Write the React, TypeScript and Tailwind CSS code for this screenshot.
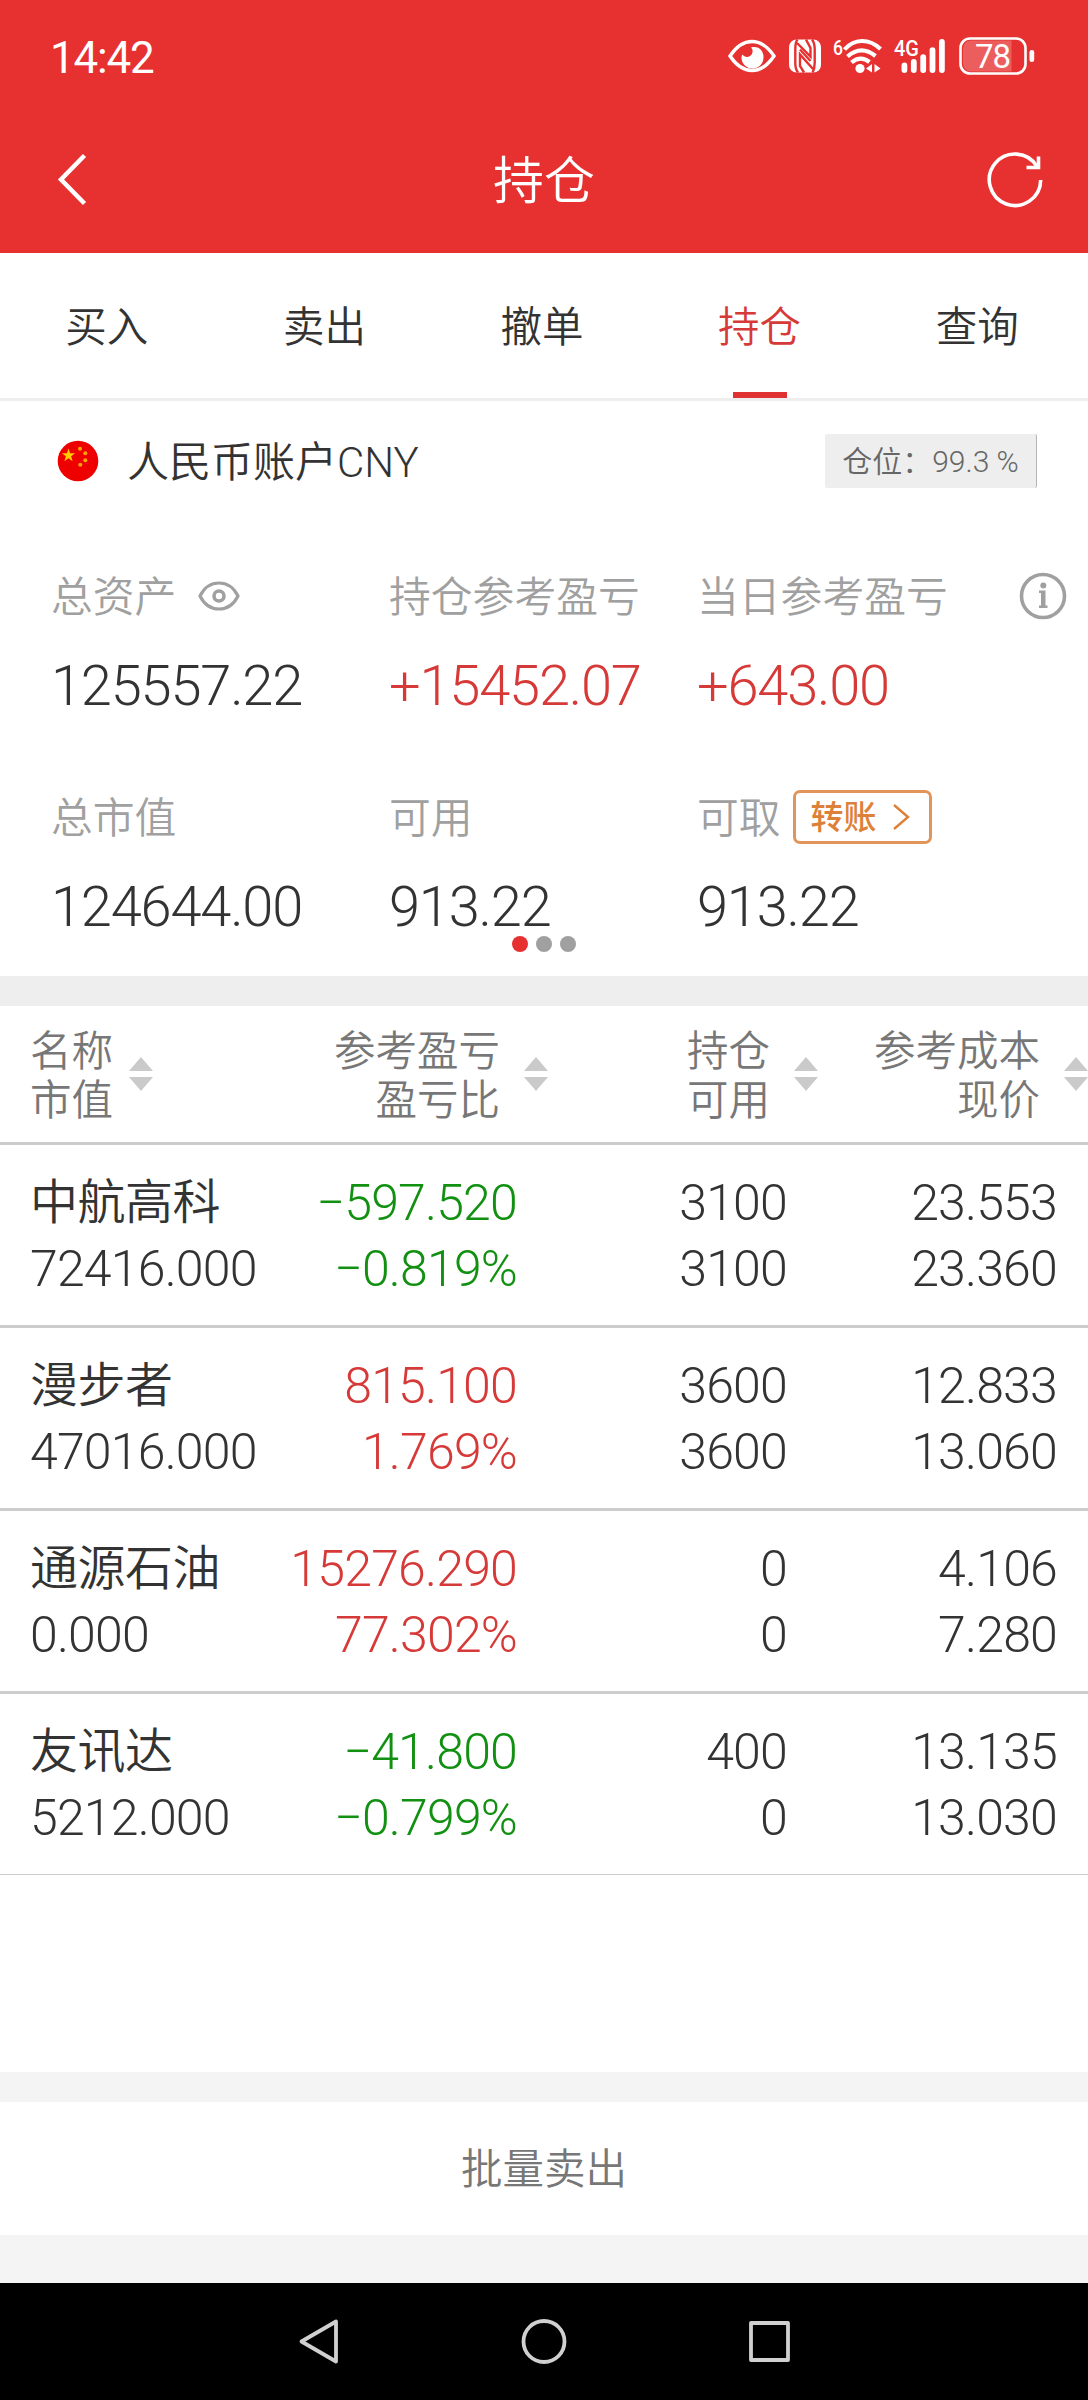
import clsx from "clsx";

interface Holding {
  name: string;
  marketValue: string;
  profit: string;
  profitRate: string;
  amount: string;
  available: string;
  cost: string;
  price: string;
  trend: "up" | "down";
}

const tabs = ["买入", "卖出", "撤单", "持仓", "查询"];
const activeTab = "持仓";

const holdings: Holding[] = [
  { name: "中航高科", marketValue: "72416.000", profit: "−597.520", profitRate: "−0.819%", amount: "3100", available: "3100", cost: "23.553", price: "23.360", trend: "down" },
  { name: "漫步者", marketValue: "47016.000", profit: "815.100", profitRate: "1.769%", amount: "3600", available: "3600", cost: "12.833", price: "13.060", trend: "up" },
  { name: "通源石油", marketValue: "0.000", profit: "15276.290", profitRate: "77.302%", amount: "0", available: "0", cost: "4.106", price: "7.280", trend: "up" },
  { name: "友讯达", marketValue: "5212.000", profit: "−41.800", profitRate: "−0.799%", amount: "400", available: "0", cost: "13.135", price: "13.030", trend: "down" },
];

const headers = [
  { lines: ["名称", "市值"], left: true },
  { lines: ["参考盈亏", "盈亏比"] },
  { lines: ["持仓", "可用"] },
  { lines: ["参考成本", "现价"] },
];

function StatusBar() {
  return (
    <div className="flex h-[112px] items-center justify-between pl-[50px] pr-[53px]">
      <span className="pt-[3px] text-[44px] leading-none tracking-[-1.2px] font-normal">14:42</span>
      <div className="flex items-center font-normal">
        <svg width="48" height="34" viewBox="0 0 48 34" className="mr-[13px]" fill="none">
          <path d="M2 17C8 8 15 2.5 24 2.5S40 8 46 17C40 26 33 31.5 24 31.5S8 26 2 17Z" stroke="white" strokeWidth="3.4" />
          <path d="M23 8.500C31 6.500 35.500 12 35.500 18A11 11 0 0 1 13.500 19C13.500 17.500 13.800 16.500 14.500 15.500C16 18 19.500 18.800 22 17C25 15 25.500 11 23 8.500Z" fill="white" />
        </svg>
        <svg width="32" height="34" viewBox="0 0 32 34" className="mr-[12px]">
          <rect x="0" y="0.500" width="32" height="33" rx="7.500" fill="white" />
          <g stroke="#e73030" strokeWidth="2.400" fill="none">
            <path d="M8.500 0.500C6.500 3 6.300 6 6.300 10V24C6.300 28 7 31 9 33.500" />
            <path d="M23 0.500C25 3 25.700 6 25.700 10V24C25.700 28 25 31 23.500 33.500" />
            <path d="M8 4L21.500 17.500V9L17 0.500" />
            <path d="M15 33.500L11 27V15.500L24 30" />
            <path d="M11 10.500L21.500 22" />
          </g>
        </svg>
        <svg width="50" height="38" viewBox="0 0 50 38" className="mr-[11px] overflow-visible" fill="none">
          <text x="0" y="17.500" fontSize="21" fontWeight="500" fill="white" textLength="10" lengthAdjust="spacingAndGlyphs">6</text>
          <g stroke="white" strokeWidth="4.200">
            <path d="M11.500 12.500C21 1.500 36 1 47.500 12" />
            <path d="M14.500 19.500Q28 7.500 42.500 19" />
            <path d="M18.500 25.500Q27.500 18 36.500 25" />
          </g>
          <circle cx="27" cy="31.500" r="4.600" fill="white" />
          <path d="M39 27v8.500l-6-4zM41.500 27v8.500l6-4z" fill="white" />
        </svg>
        <svg width="52" height="38" viewBox="0 0 52 38" className="mr-[13px] overflow-visible">
          <text x="0" y="18.500" fontSize="22.500" fontWeight="500" fill="white" textLength="25" lengthAdjust="spacingAndGlyphs">4G</text>
          <g fill="white">
            <rect x="7.500" y="25.500" width="5.800" height="10.500" rx="2.900" />
            <rect x="16.900" y="22" width="5.800" height="14" rx="2.900" />
            <rect x="26.300" y="17.300" width="5.800" height="18.700" rx="2.900" />
            <rect x="35.600" y="10.300" width="5.800" height="25.700" rx="2.900" />
            <rect x="45" y="2" width="5.800" height="34" rx="2.900" />
          </g>
        </svg>
        <svg width="76" height="38" viewBox="0 0 76 38">
          <path d="M12 3.500H52.500V34.500H12a8 8 0 0 1-8-8v-15a8 8 0 0 1 8-8Z" fill="white" fillOpacity="0.22" />
          <rect x="1.500" y="1.500" width="65" height="35" rx="9.500" fill="none" stroke="white" strokeWidth="2.600" />
          <rect x="70.500" y="13" width="4.700" height="12" rx="2.300" fill="white" />
          <text x="34" y="31" fontSize="33" textAnchor="middle" textLength="36" fill="white">78</text>
        </svg>
      </div>
    </div>
  );
}

function TitleBar() {
  return (
    <div className="flex h-[141px] items-center justify-between pl-[56px] pr-[42px] pb-[7px]">
      <svg width="62" height="54" viewBox="0 0 62 54" fill="none" stroke="white" strokeWidth="4.500">
        <path d="M28.500 3.500L5 27.500L28.500 51.500" />
      </svg>
      <h1 className="mr-[14px] pt-[4px] text-[51px] leading-none">持仓</h1>
      <svg width="62" height="62" viewBox="0 0 62 62" fill="none" stroke="white" strokeWidth="3.600">
        <path d="M56.700 32A25.700 25.700 0 1 1 53 18.500" />
        <path d="M54.500 8.500V19.500H42.500" />
      </svg>
    </div>
  );
}

function ChinaFlag() {
  return (
    <svg width="42" height="42" viewBox="0 0 42 42">
      <circle cx="21" cy="21" r="20.300" fill="#ee0000" />
      <path d="M11.500 8.500l1.600 4.800h5l-4 3 1.500 4.900-4.100-3-4.100 3 1.500-4.900-4-3h5z" fill="#ffcc00" />
      <g fill="#f7a500">
        <circle cx="23" cy="8.800" r="2" />
        <circle cx="28.300" cy="13.300" r="2" />
        <circle cx="28.300" cy="20.300" r="2" />
        <circle cx="23.300" cy="24.700" r="2" />
      </g>
    </svg>
  );
}

interface StatProps {
  label: string;
  value: string;
  red?: boolean;
  children?: React.ReactNode;
}

function Stat({ label, value, red, children }: StatProps) {
  return (
    <div>
      <div className="flex h-[60px] items-center text-[41.8px] leading-none whitespace-nowrap text-[#a0a0a0]">
        <span className="pt-[3px]">{label}</span>
        {children}
      </div>
      <div
        className={clsx(
          "mt-[30px] h-[60px] text-[56px] leading-[60px] tracking-[-1.2px]",
          red ? "text-[#d63a38]" : "text-[#333333]"
        )}
      >
        {value}
      </div>
    </div>
  );
}

function SortArrows() {
  return (
    <svg width="24" height="34" viewBox="0 0 24 34" fill="#cacaca">
      <path d="M12 0L24 14H0zM0 20H24L12 34z" />
    </svg>
  );
}

function Account() {
  return (
    <section className="h-[575px]">
      <div className="flex h-[120px] items-center justify-between pl-[57px] pr-[51px]">
        <div className="flex items-center">
          <ChinaFlag />
          <span className="ml-[28px] pt-[3px] text-[42px] leading-none text-[#333333]">人民币账户CNY</span>
        </div>
        <div className="flex h-[54px] w-[212px] items-center justify-center rounded-[2px] border-r border-[#b5b5b5] bg-[#eeeeee] pt-[2px] text-[30px] leading-none whitespace-pre text-[#666666]">
          仓位：99.3 %
        </div>
      </div>
      <div className="relative grid grid-cols-[338px_308px_1fr] gap-y-[71px] pt-[45px] pl-[51px]">
        <Stat label="总资产" value="125557.22">
          <svg width="42" height="30" viewBox="0 0 42 30" className="ml-[22px]" fill="none" stroke="#a0a0a0">
            <path d="M2 15C6.500 6 13 2 21 2s14.500 4 19 13c-4.500 9-11 13-19 13S6.500 24 2 15Z" strokeWidth="3.200" />
            <circle cx="21" cy="15" r="5" strokeWidth="3.600" />
          </svg>
        </Stat>
        <Stat label="持仓参考盈亏" value="+15452.07" red />
        <Stat label="当日参考盈亏" value="+643.00" red>
          <svg width="48" height="48" viewBox="0 0 48 48" className="ml-[71px]" fill="none">
            <circle cx="24" cy="24" r="21.500" stroke="#a0a0a0" strokeWidth="3.600" />
            <circle cx="24.300" cy="13.500" r="3" fill="#a0a0a0" />
            <path d="M20 18.500h6.500v15h2V36H20v-2.500h2V21h-2z" fill="#a0a0a0" />
          </svg>
        </Stat>
        <Stat label="总市值" value="124644.00" />
        <Stat label="可用" value="913.22" />
        <Stat label="可取" value="913.22">
          <button className="ml-[12px] flex h-[54px] w-[139px] items-center rounded-[7px] border-[3px] border-[#e2955a] pl-[15px] text-[33px] font-medium text-[#dd8038]">
            <span className="pt-px">转账</span>
            <svg width="18" height="28" viewBox="0 0 18 28" className="ml-[15px]" fill="none" stroke="#dd8038" strokeWidth="2.400">
              <path d="M2 2L16 14L2 26" />
            </svg>
          </button>
        </Stat>
        <div className="absolute top-[415px] left-[512px] flex gap-2">
          <span className="size-4 rounded-full bg-[#e73030]" />
          <span className="size-4 rounded-full bg-[#a0a0a0]" />
          <span className="size-4 rounded-full bg-[#a0a0a0]" />
        </div>
      </div>
    </section>
  );
}

function HoldingRow({ item, last }: { item: Holding; last: boolean }) {
  return (
    <div
      className={clsx(
        "grid grid-cols-[239px_248px_270px_270px] pt-[25px] pl-[30px] text-right text-[50px] leading-[66px] tracking-[-0.8px] whitespace-nowrap text-[#333333]",
        last ? "h-[181px] border-b border-[#cccccc]" : "h-[183px] border-b-[3px] border-[#cccccc]"
      )}
    >
      <div className="text-left">
        <p className="text-[48px] tracking-[-0.5px]">{item.name}</p>
        <p>{item.marketValue}</p>
      </div>
      <div className={item.trend === "up" ? "text-[#d63a38]" : "text-[#129012]"}>
        <p>{item.profit}</p>
        <p>{item.profitRate}</p>
      </div>
      <div>
        <p>{item.amount}</p>
        <p>{item.available}</p>
      </div>
      <div>
        <p>{item.cost}</p>
        <p>{item.price}</p>
      </div>
    </div>
  );
}

function NavBar() {
  return (
    <nav className="flex h-[117px] items-center justify-center gap-[178px] bg-black">
      <svg width="48" height="50" viewBox="0 0 48 50" fill="none" stroke="#d0d0d0" strokeWidth="3.800" strokeLinejoin="round">
        <path d="M42 4.500V44.500L7.500 24.500Z" />
      </svg>
      <svg width="48" height="50" viewBox="0 0 48 50" fill="none" stroke="#d0d0d0" strokeWidth="3.800">
        <circle cx="24" cy="24.500" r="20.500" />
      </svg>
      <svg width="48" height="50" viewBox="0 0 48 50" fill="none" stroke="#d0d0d0" strokeWidth="3.800" strokeLinejoin="round">
        <rect x="5" y="6" width="37" height="37" />
      </svg>
    </nav>
  );
}

export default function App() {
  return (
    <div className="flex h-[2400px] w-[1088px] flex-col overflow-hidden bg-white font-['Roboto','Noto_Sans_CJK_SC',sans-serif] font-[350]">
      <header className="h-[253px] bg-[#e73030] text-white">
        <StatusBar />
        <TitleBar />
      </header>

      <div className="grid h-[148px] grid-cols-5 border-b-[3px] border-[#eeeeee]">
        {tabs.map((tab) => (
          <div
            key={tab}
            className={clsx(
              "mr-0.5 -ml-0.5 flex flex-col items-center text-[41.5px]",
              tab === activeTab ? "text-[#d63a38]" : "text-[#333333]"
            )}
          >
            <span className="h-[139px] leading-[150px]">{tab}</span>
            {tab === activeTab && <span className="h-[6px] w-[54px] bg-[#e03232]" />}
          </div>
        ))}
      </div>

      <Account />

      <div className="h-[30px] bg-[#eeeeee]" />
      <div className="grid h-[139px] grid-cols-[240px_278px_270px_270px] border-b-[3px] border-[#cccccc] pl-[30px] text-[41.5px] leading-[49px] text-[#777777]">
        {headers.map((header) => (
          <div key={header.lines[0]} className={clsx("flex items-center", header.left ? "justify-start gap-[16px]" : "justify-end gap-[24px] text-right")}>
            <div className="pt-[3px]">
              {header.lines.map((line) => (
                <p key={line}>{line}</p>
              ))}
            </div>
            <SortArrows />
          </div>
        ))}
      </div>
      {holdings.map((item, i) => (
        <HoldingRow key={item.name} item={item} last={i === holdings.length - 1} />
      ))}

      <div className="flex-1" />
      <footer className="h-[211px] bg-[#f4f4f4] pt-[30px]">
        <button className="block h-[133px] w-full bg-white text-[41.5px] leading-[136px] text-[#777777]">批量卖出</button>
      </footer>
      <NavBar />
    </div>
  );
}
